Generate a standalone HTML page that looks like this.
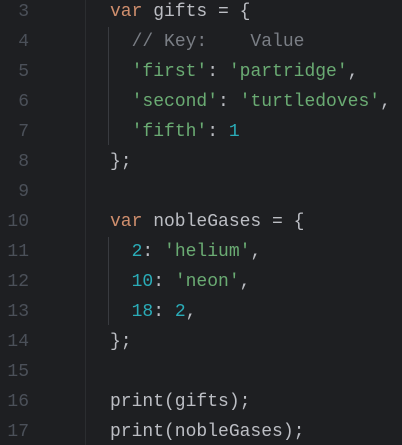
<!DOCTYPE html>
<html><head><style>
html,body{margin:0;padding:0;background:#1e1f22;width:402px;height:445px;overflow:hidden}
.w{position:relative;width:402px;height:445px;font-family:"Liberation Mono",monospace;font-size:18px}
.l{position:absolute;left:0;height:30px;line-height:30px;white-space:pre}
.n{position:absolute;width:29px;text-align:right;color:#4b5059;left:0}
.c{position:absolute;left:110px;color:#bcbec4}
.k{color:#cf8e6d}.s{color:#6aab73}.num{color:#2aacb8}.cm{color:#7a7e85}
.d{position:absolute;left:85px;top:0;width:1px;height:445px;background:#2b2d30}
.g{position:absolute;left:108px;width:1px;background:#393b40}
</style></head><body><div class="w">
<div class="d"></div>
<div class="g" style="top:27px;height:118px"></div>
<div class="g" style="top:237px;height:88px"></div>
<div class="l" style="top:-3px"><span class="n">3</span><span class="c"><span class="k">var</span> gifts = {</span></div>
<div class="l" style="top:27px"><span class="n">4</span><span class="c">  <span class="cm">// Key:    Value</span></span></div>
<div class="l" style="top:57px"><span class="n">5</span><span class="c">  <span class="s">'first'</span>: <span class="s">'partridge'</span>,</span></div>
<div class="l" style="top:87px"><span class="n">6</span><span class="c">  <span class="s">'second'</span>: <span class="s">'turtledoves'</span>,</span></div>
<div class="l" style="top:117px"><span class="n">7</span><span class="c">  <span class="s">'fifth'</span>: <span class="num">1</span></span></div>
<div class="l" style="top:147px"><span class="n">8</span><span class="c">};</span></div>
<div class="l" style="top:177px"><span class="n">9</span></div>
<div class="l" style="top:207px"><span class="n">10</span><span class="c"><span class="k">var</span> nobleGases = {</span></div>
<div class="l" style="top:237px"><span class="n">11</span><span class="c">  <span class="num">2</span>: <span class="s">'helium'</span>,</span></div>
<div class="l" style="top:267px"><span class="n">12</span><span class="c">  <span class="num">10</span>: <span class="s">'neon'</span>,</span></div>
<div class="l" style="top:297px"><span class="n">13</span><span class="c">  <span class="num">18</span>: <span class="num">2</span>,</span></div>
<div class="l" style="top:327px"><span class="n">14</span><span class="c">};</span></div>
<div class="l" style="top:357px"><span class="n">15</span></div>
<div class="l" style="top:387px"><span class="n">16</span><span class="c">print(gifts);</span></div>
<div class="l" style="top:417px"><span class="n">17</span><span class="c">print(nobleGases);</span></div>
</div></body></html>
